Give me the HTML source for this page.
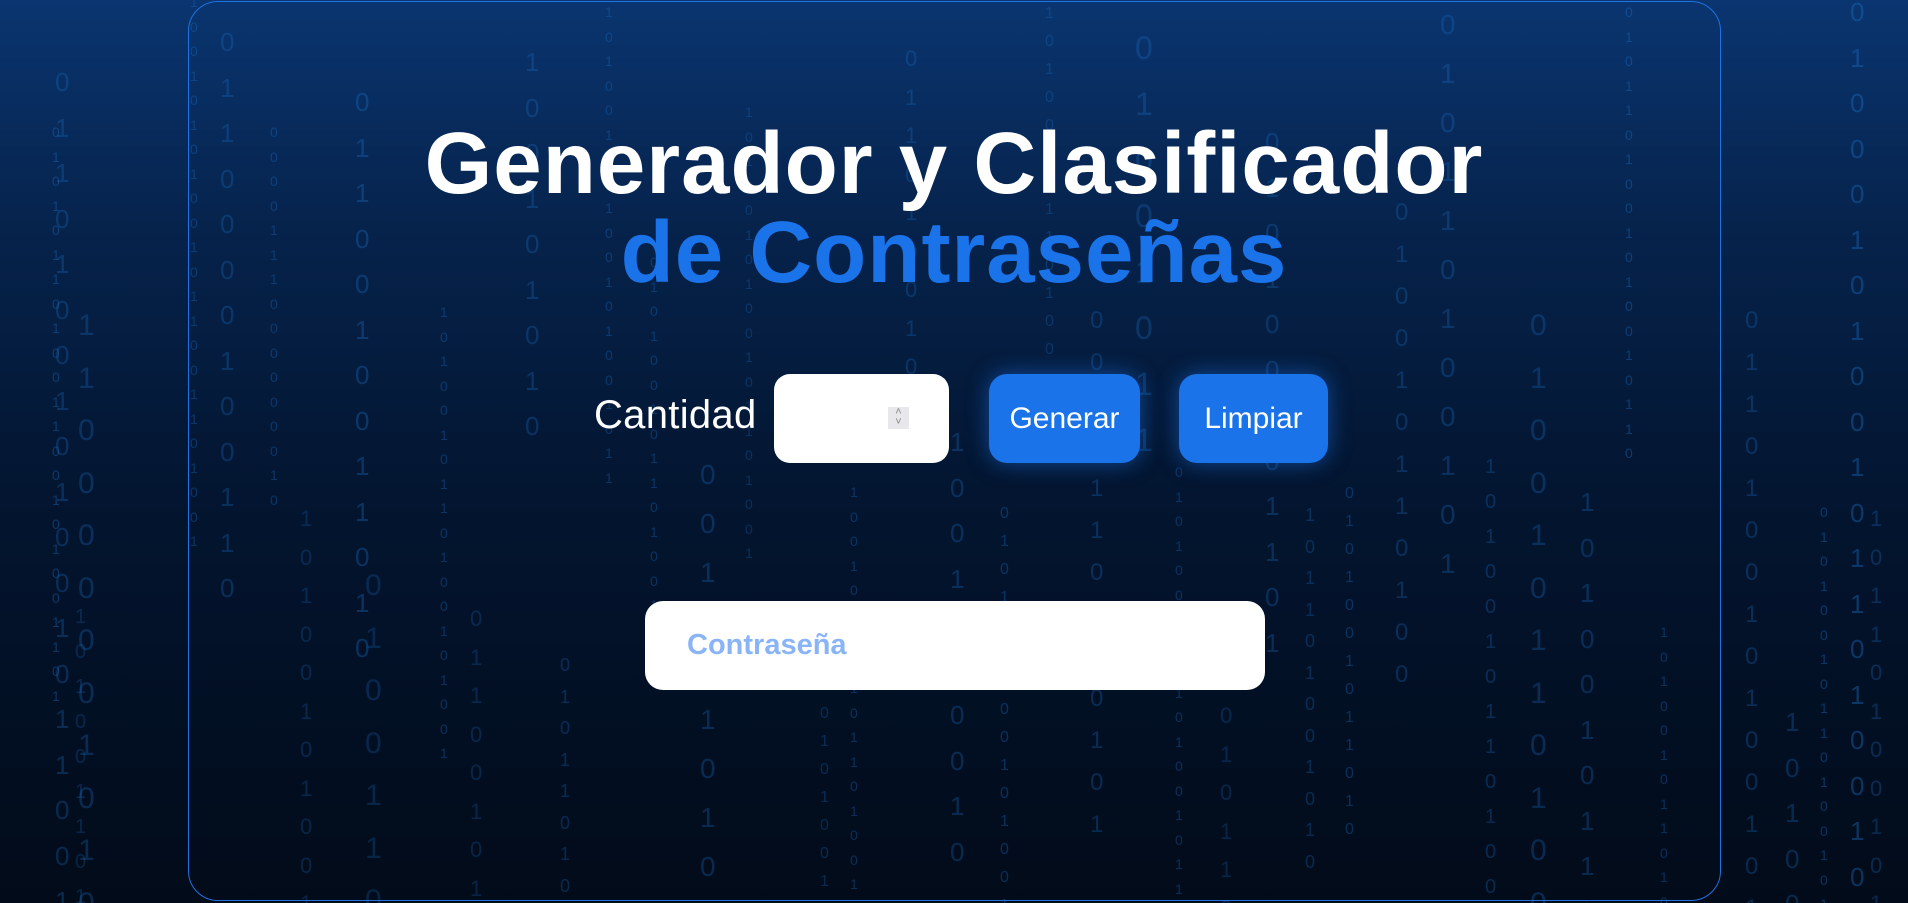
<!DOCTYPE html>
<html><head><meta charset="utf-8"><style>
html,body{margin:0;padding:0;width:1908px;height:903px;overflow:hidden}
body{background:linear-gradient(180deg,#0a3570 0%,#06234c 25%,#031530 55%,#020b19 100%);font-family:"Liberation Sans",sans-serif;position:relative}
.rain{position:absolute;left:0;top:0;width:1908px;height:903px;overflow:hidden}
.col{position:absolute;width:1ch;word-break:break-all;font-family:"Liberation Sans",sans-serif;color:#1a6fc4;text-align:center;line-height:1.75}
.card{position:absolute;left:188px;top:1px;width:1533px;height:900px;border:1.5px solid #1f72e0;border-radius:30px;box-sizing:border-box}
h1{position:absolute;left:0;width:1908px;top:119px;margin:0;text-align:center;font-family:"Liberation Sans",sans-serif;font-weight:bold;font-size:87px;line-height:89px;color:#fff;letter-spacing:1px}
h1 span{color:#1a73e8}
.lbl{position:absolute;left:594px;top:393px;color:#fff;font-size:40px;letter-spacing:.3px}
.inp{position:absolute;left:774px;top:374px;width:175px;height:89px;background:#fff;border-radius:16px}
.spin{position:absolute;left:114px;top:33px;width:21px;height:22px;background:#e8e8ec;color:#888;font-size:11px;line-height:10px;text-align:center}
.btn{position:absolute;top:374px;height:89px;background:#1a73e8;border-radius:18px;color:#fff;font-size:30px;line-height:89px;text-align:center;box-shadow:0 0 22px rgba(26,115,232,.55)}
.pw{position:absolute;left:645px;top:601px;width:620px;height:89px;background:#fff;border-radius:18px}
.pw span{position:absolute;left:42px;top:28px;font-size:29px;font-weight:bold;color:#8ab4f8}
</style></head><body>
<div class="rain">
<div class="col" style="left:55px;top:60px;font-size:26px;opacity:.3">0110100101001011001</div>
<div class="col" style="left:75px;top:600px;font-size:20px;opacity:.25">101001101001</div>
<div class="col" style="left:52px;top:120px;font-size:14px;opacity:.4">010101101001100101001101</div>
<div class="col" style="left:78px;top:300px;font-size:30px;opacity:.3">1100000010100</div>
<div class="col" style="left:190px;top:-10px;font-size:14px;opacity:.35">10010101001011001101001</div>
<div class="col" style="left:220px;top:20px;font-size:26px;opacity:.3">0110000100110</div>
<div class="col" style="left:270px;top:120px;font-size:14px;opacity:.35">0000111000000010</div>
<div class="col" style="left:300px;top:500px;font-size:22px;opacity:.25">1010010100110</div>
<div class="col" style="left:355px;top:80px;font-size:26px;opacity:.35">0110010011010</div>
<div class="col" style="left:365px;top:560px;font-size:30px;opacity:.25">0100110</div>
<div class="col" style="left:440px;top:300px;font-size:14px;opacity:.35">1010010110100101001</div>
<div class="col" style="left:470px;top:600px;font-size:22px;opacity:.25">0110010101</div>
<div class="col" style="left:525px;top:40px;font-size:26px;opacity:.3">100101010</div>
<div class="col" style="left:560px;top:650px;font-size:18px;opacity:.3">01011010010</div>
<div class="col" style="left:605px;top:0px;font-size:14px;opacity:.35">10100110100101001011</div>
<div class="col" style="left:650px;top:250px;font-size:14px;opacity:.35">010100101101001</div>
<div class="col" style="left:700px;top:450px;font-size:28px;opacity:.3">0010110100</div>
<div class="col" style="left:745px;top:100px;font-size:14px;opacity:.3">1010010100101101001</div>
<div class="col" style="left:820px;top:700px;font-size:16px;opacity:.3">01010010110</div>
<div class="col" style="left:850px;top:480px;font-size:14px;opacity:.35">1001010010110100101</div>
<div class="col" style="left:905px;top:40px;font-size:22px;opacity:.3">0110100101</div>
<div class="col" style="left:950px;top:420px;font-size:26px;opacity:.3">1001010010</div>
<div class="col" style="left:1000px;top:500px;font-size:16px;opacity:.35">01011010010100101</div>
<div class="col" style="left:1045px;top:0px;font-size:16px;opacity:.3">1010010110100</div>
<div class="col" style="left:1090px;top:300px;font-size:24px;opacity:.3">0010110100101</div>
<div class="col" style="left:1135px;top:20px;font-size:32px;opacity:.3">01001011</div>
<div class="col" style="left:1175px;top:460px;font-size:14px;opacity:.35">0101001011010010110</div>
<div class="col" style="left:1220px;top:620px;font-size:22px;opacity:.25">10010110</div>
<div class="col" style="left:1265px;top:120px;font-size:26px;opacity:.3">010100101101</div>
<div class="col" style="left:1305px;top:500px;font-size:18px;opacity:.3">101101001010</div>
<div class="col" style="left:1345px;top:480px;font-size:16px;opacity:.35">0101001011010</div>
<div class="col" style="left:1395px;top:150px;font-size:24px;opacity:.3">1010010110100</div>
<div class="col" style="left:1440px;top:0px;font-size:28px;opacity:.3">010110100101</div>
<div class="col" style="left:1485px;top:450px;font-size:20px;opacity:.3">10100101101001</div>
<div class="col" style="left:1530px;top:300px;font-size:30px;opacity:.3">01001011010010</div>
<div class="col" style="left:1580px;top:480px;font-size:26px;opacity:.3">101001011010</div>
<div class="col" style="left:1625px;top:0px;font-size:14px;opacity:.4">0101101001010010110</div>
<div class="col" style="left:1660px;top:620px;font-size:14px;opacity:.35">1010010110100</div>
<div class="col" style="left:1745px;top:300px;font-size:24px;opacity:.3">01101001010010110100</div>
<div class="col" style="left:1785px;top:700px;font-size:26px;opacity:.3">10100</div>
<div class="col" style="left:1820px;top:500px;font-size:14px;opacity:.4">0101001011010010100</div>
<div class="col" style="left:1850px;top:-10px;font-size:26px;opacity:.4">01000101001011010010110100</div>
<div class="col" style="left:1870px;top:500px;font-size:22px;opacity:.3">1011010010100101</div>
</div>
<div class="card"></div>
<h1>Generador y Clasificador<br><span>de Contraseñas</span></h1>
<div class="lbl">Cantidad</div>
<div class="inp"><div class="spin">˄<br>˅</div></div>
<div class="btn" style="left:989px;width:151px">Generar</div>
<div class="btn" style="left:1179px;width:149px">Limpiar</div>
<div class="pw"><span>Contraseña</span></div>
</body></html>
